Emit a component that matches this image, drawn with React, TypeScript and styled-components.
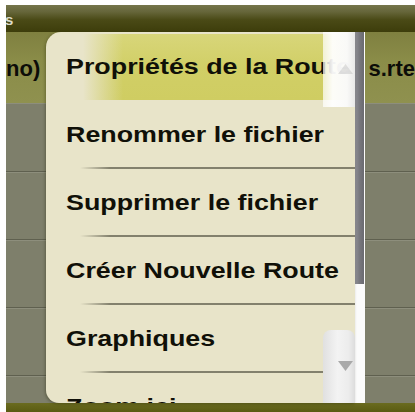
import React from "react";
import styled, { createGlobalStyle } from "styled-components";

const Global = createGlobalStyle`
  html, body { margin: 0; padding: 0; background: #ffffff; }
  body { font-family: "Liberation Sans", Arial, sans-serif; }
  #root { width: 415px; height: 412px; overflow: hidden; }
`;

const Page = styled.div`
  width: 415px;
  height: 412px;
  padding: 5px 0 0 6px;
  box-sizing: border-box;
  background: #ffffff;
  overflow: hidden;
`;

const Screen = styled.div`
  position: relative;
  height: 407px;
  display: flex;
  flex-direction: column;
  overflow: hidden;
`;

const Header = styled.div`
  height: 27px;
  flex: none;
  background: linear-gradient(180deg, #75754b 0%, #66663a 25%, #4a4a16 55%, #3d3d0b 100%);
  color: #dcdccb;
  font-weight: bold;
  font-size: 15px;
  line-height: 1;
  padding-top: 7px;
  box-sizing: border-box;
  overflow: hidden;
`;

const HeaderText = styled.span`
  display: inline-block;
  margin-left: -1px;
`;

const TitleBar = styled.div`
  height: 71px;
  flex: none;
  display: flex;
  align-items: center;
  justify-content: space-between;
  padding-top: 3px;
  box-sizing: border-box;
  background: linear-gradient(180deg, #7f8040 0%, #8a8c48 40%, #8f914f 100%);
  font-weight: bold;
  font-size: 22px;
  color: #0c0c08;
  white-space: nowrap;
  overflow: hidden;
`;

const Rows = styled.div`
  flex: 1;
  display: flex;
  flex-direction: column;
  background: #7e7f6b;
  overflow: hidden;
`;

const Row = styled.div<{ $h: number }>`
  height: ${(p) => p.$h}px;
  flex: none;
  box-sizing: border-box;
  border-top: 1px solid #8d8e7c;
  border-bottom: 1px solid #5f604f;
  background: #7e7f6b;
`;

const Footer = styled.div`
  height: 9px;
  flex: none;
  background: linear-gradient(180deg, #6a6b20 0%, #5a5b12 100%);
`;

const Menu = styled.div`
  position: absolute;
  left: 40px;
  top: 27px;
  width: 319px;
  height: 371px;
  display: flex;
`;

const List = styled.div`
  position: relative;
  flex: 1;
  overflow: hidden;
  background: #e8e4c9;
  border-radius: 15px 0 0 13px;
  box-shadow: -1px 1px 3px rgba(40, 40, 10, 0.35);
`;

const Item = styled.div<{ $active?: boolean }>`
  position: relative;
  height: 68px;
  display: flex;
  align-items: center;
  padding: 2px 0 0 20px;
  box-sizing: border-box;
  font-weight: bold;
  font-size: 22px;
  color: #101008;
  white-space: nowrap;

  &::before {
    content: "";
    position: absolute;
    left: 37px;
    right: 0;
    top: 2px;
    bottom: 0;
    display: ${(p) => (p.$active ? "block" : "none")};
    background:
      linear-gradient(90deg, rgba(232, 228, 201, 1) 0px, rgba(232, 228, 201, 0) 40px),
      linear-gradient(180deg, #d8d67a 0%, #d1cf66 50%, #cfcd62 100%);
  }

  &::after {
    content: "";
    position: absolute;
    left: 34px;
    right: 0;
    bottom: -1px;
    height: 2px;
    display: ${(p) => (p.$active ? "none" : "block")};
    background: linear-gradient(90deg, rgba(125, 123, 104, 0) 0px, rgba(125, 123, 104, 0.95) 30px);
  }
`;

const Label = styled.span`
  position: relative;
  display: inline-block;
  transform: scaleX(1.22);
  transform-origin: left center;
`;

const ScrollButton = styled.div<{ $pos: "top" | "bottom" }>`
  position: absolute;
  z-index: 2;
  right: 0;
  width: 32px;
  display: flex;
  align-items: center;
  justify-content: flex-end;
  padding-right: 2px;
  box-sizing: border-box;
  ${(p) =>
    p.$pos === "top"
      ? `
    top: 0;
    height: 75px;
    background: linear-gradient(90deg, rgba(255,255,255,0.7) 0%, rgba(255,255,255,0.95) 30%, rgba(250,250,250,0.98) 75%, rgba(232,232,232,1) 100%);
  `
      : `
    bottom: 0;
    height: 73px;
    border-radius: 8px 8px 0 0;
    background: linear-gradient(90deg, #e0e0e0 0%, #f3f3f3 45%, #ececec 80%, #dcdcdc 100%);
  `}
`;

const Track = styled.div`
  width: 10px;
  flex: none;
  background: #fbfbfb;
  display: flex;
  flex-direction: column;
`;

const Thumb = styled.div`
  width: 9px;
  height: 252px;
  background: linear-gradient(90deg, #8e8e94 0%, #78787e 50%, #6a6a70 100%);
`;

const Arrow: React.FC<{ dir: "up" | "down"; color: string }> = ({ dir, color }) => (
  <svg width="15" height="11" viewBox="0 0 15 11">
    {dir === "down" ? (
      <polygon points="0,0 15,0 7.5,10" fill={color} />
    ) : (
      <polygon points="0,10 15,10 7.5,0" fill={color} />
    )}
  </svg>
);

const items = [
  "Propriétés de la Route",
  "Renommer le fichier",
  "Supprimer le fichier",
  "Créer Nouvelle Route",
  "Graphiques",
  "Zoom ici",
];

export default function App() {
  return (
    <>
      <Global />
      <Page>
        <Screen>
          <Header>
            <HeaderText>s</HeaderText>
          </Header>
          <TitleBar>
            <span>no)</span>
            <span>s.rte</span>
          </TitleBar>
          <Rows>
            <Row $h={69} />
            <Row $h={68} />
            <Row $h={68} />
            <Row $h={68} />
            <Row $h={68} />
          </Rows>
          <Footer />
          <Menu>
            <List>
              {items.map((t, i) => (
                <Item key={t} $active={i === 0}>
                  <Label>{t}</Label>
                </Item>
              ))}
              <ScrollButton $pos="top">
                <Arrow dir="up" color="rgba(175,175,175,0.35)" />
              </ScrollButton>
              <ScrollButton $pos="bottom">
                <Arrow dir="down" color="#a9a9a9" />
              </ScrollButton>
            </List>
            <Track>
              <Thumb />
            </Track>
          </Menu>
        </Screen>
      </Page>
    </>
  );
}
